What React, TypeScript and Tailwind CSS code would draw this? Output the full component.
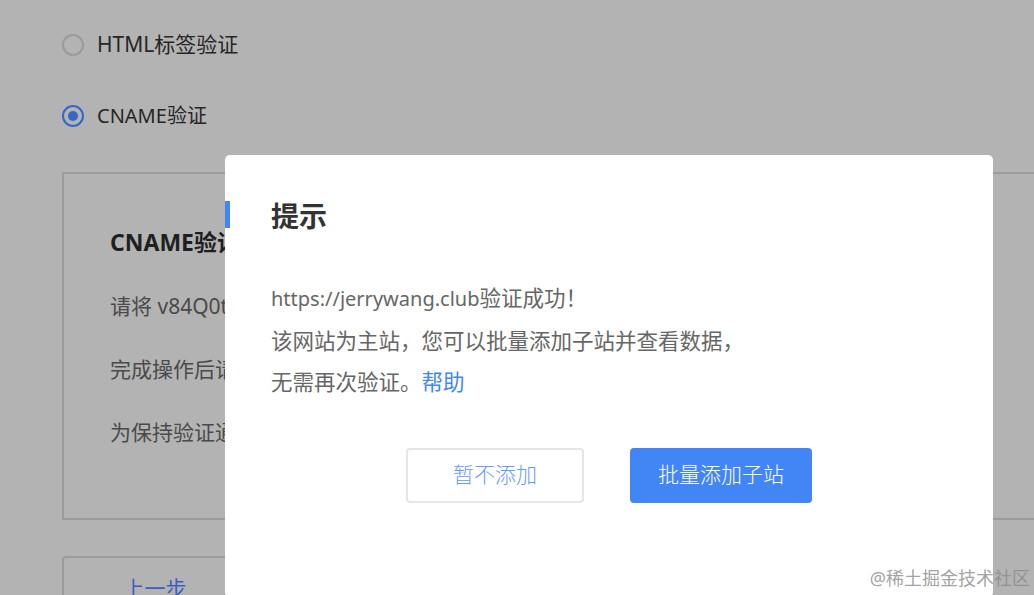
import React from 'react';

const font = { fontFamily: '"Noto Sans", "Noto Sans CJK SC", sans-serif' };

function Radio({ checked }: { checked?: boolean }) {
  return checked ? (
    <span className="w-[22px] h-[22px] rounded-full border-2 border-[#3566c8] flex items-center justify-center shrink-0">
      <span className="w-[10px] h-[10px] rounded-full bg-[#3566c8]" />
    </span>
  ) : (
    <span className="w-[22px] h-[22px] rounded-full border-2 border-[#9a9a9a] shrink-0" />
  );
}

export default function App() {
  return (
    <div className="relative w-[1034px] h-[595px] overflow-hidden bg-[#b3b3b3]" style={font}>
      {/* page behind the mask */}
      <div className="pl-[62px] pt-[34px]">
        <label className="flex items-center gap-[13px] h-[22px] text-[21px] text-[#262626]">
          <Radio />
          <span>HTML标签验证</span>
        </label>
        <label className="flex items-center gap-[13px] h-[22px] mt-[49px] text-[20px] text-[#262626]">
          <Radio checked />
          <span>CNAME验证</span>
        </label>

        <div className="mt-[45px] w-[1000px] h-[348px] border-2 border-[#9c9c9c] pl-[46px] pt-[53px]">
          <h3 className="text-[23px] leading-[30px] font-bold text-[#1f1f1f]">CNAME验证</h3>
          <div className="mt-[34px] flex flex-col gap-[33px] text-[21px] leading-[30px] text-[#4a4a4a] whitespace-nowrap">
            <p>请将 v84Q0t</p>
            <p>完成操作后请</p>
            <p>为保持验证通</p>
          </div>
        </div>

        <button className="mt-[36px] w-[186px] h-[60px] border-2 border-[#9c9c9c] rounded-[4px] text-[21px] text-[#3a5fc0] pt-[6px]">
          上一步
        </button>
      </div>

      {/* dialog */}
      <div className="absolute left-[225px] top-[155px] w-[768px] h-[442px] bg-white rounded-[5px] pt-[43px] pl-[46px]">
        <span className="absolute left-0 top-[46px] w-[5px] h-[27px] bg-[#4285f4]" />
        <h2 className="text-[28px] leading-[36px] font-bold text-[#333]">提示</h2>
        <div className="mt-[43px] text-[21.5px] leading-[41.5px] text-[#666]">
          <p>
            <span className="text-[20px]">https://jerrywang.club</span>验证成功！
          </p>
          <p>该网站为主站，您可以批量添加子站并查看数据，</p>
          <p>
            无需再次验证。<a className="text-[#4285f4] cursor-pointer">帮助</a>
          </p>
        </div>
        <div className="mt-[45px] -ml-[46px] flex justify-center gap-[46px]">
          <button className="w-[178px] h-[55px] border-2 border-[#e6e6e6] rounded-[4px] text-[21px] font-light text-[#6a9bf3]">
            暂不添加
          </button>
          <button className="w-[182px] h-[55px] rounded-[4px] bg-[#4285f4] text-[21px] font-light text-white">
            批量添加子站
          </button>
        </div>
      </div>

      <span className="absolute right-[4px] top-[566px] text-[18px] leading-[24px] text-[#8a8a8a]/80">
        @稀土掘金技术社区
      </span>
    </div>
  );
}
